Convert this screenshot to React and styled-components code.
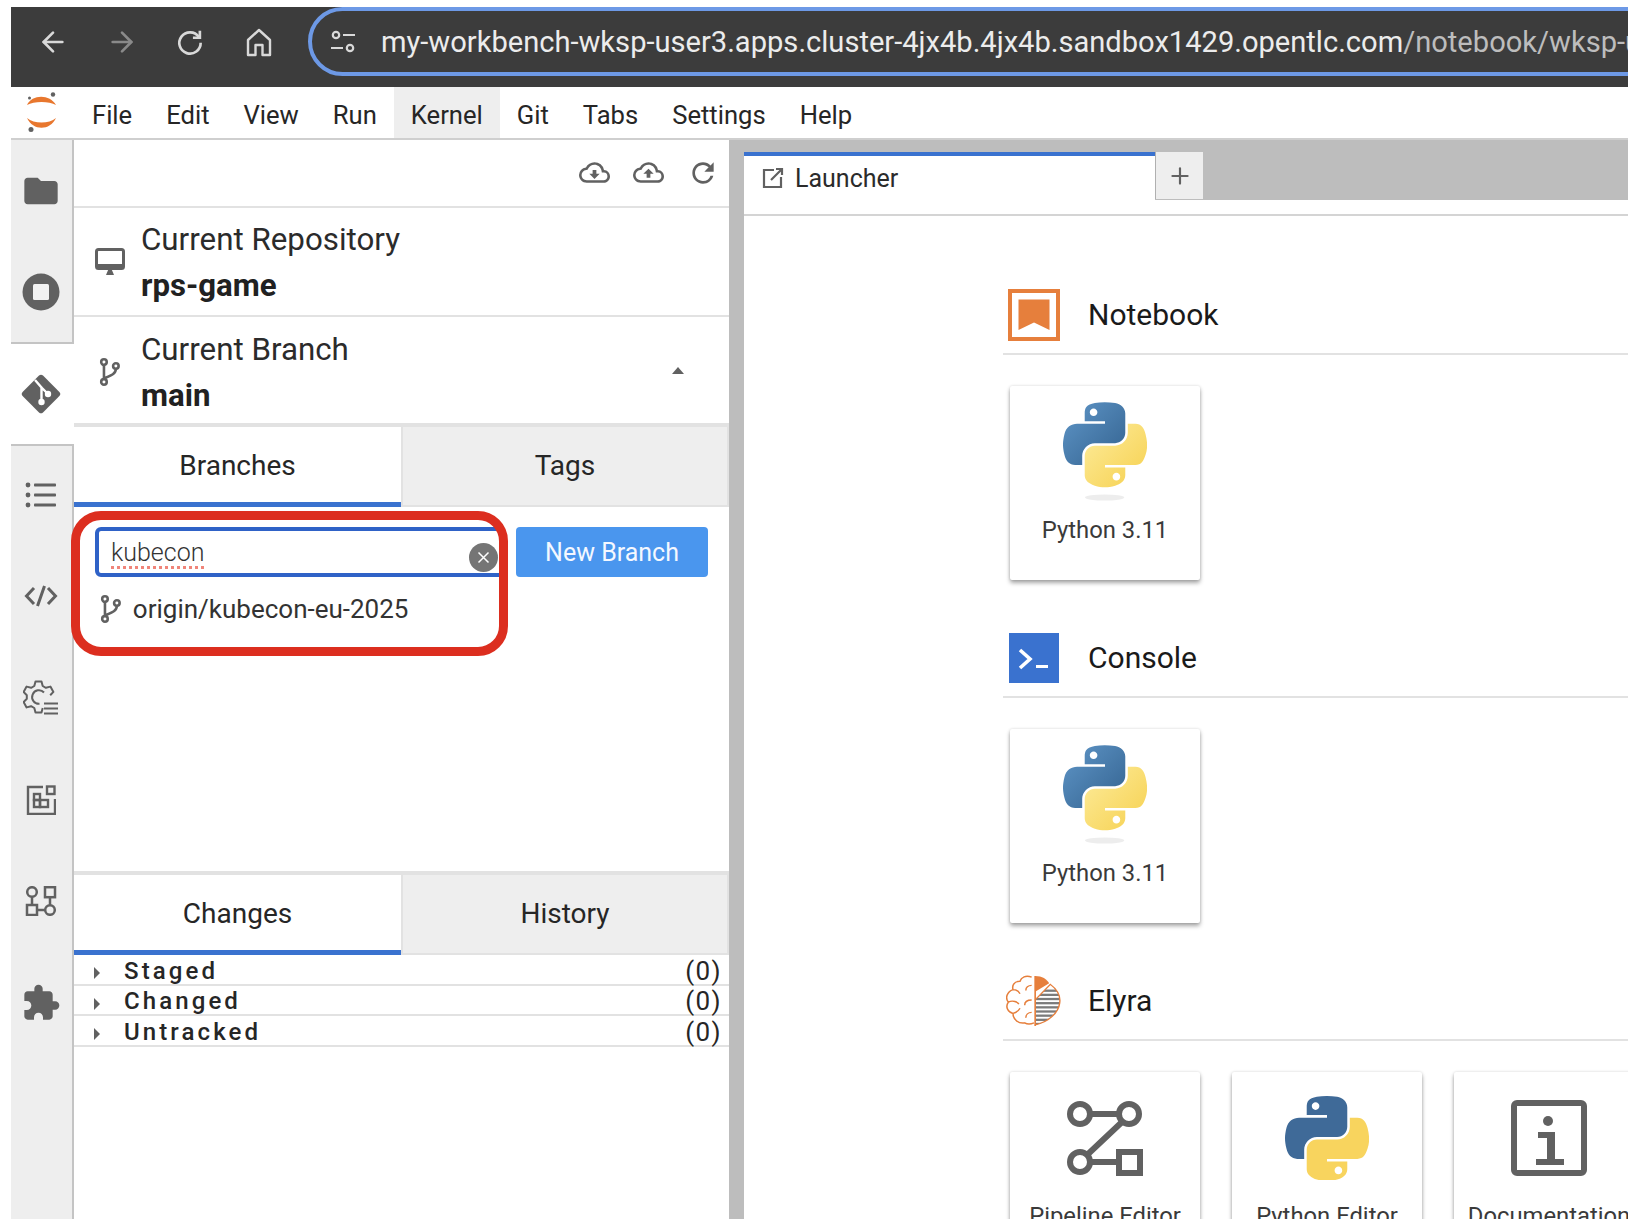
import React from 'react';
import styled, { createGlobalStyle } from 'styled-components';
import { ArrowLeft, ArrowRight, Plus } from 'lucide-react';
import { MdFolder, MdExtension, MdRefresh, MdOutlineCloudDownload, MdOutlineCloudUpload } from 'react-icons/md';

const GlobalStyle = createGlobalStyle`
  html, body { margin: 0; padding: 0; background: #fff; }
  body { font-family: Roboto, "Liberation Sans", sans-serif; color: #212121; }
  * { box-sizing: border-box; }
`;

const Screen = styled.div`
  width: 1638px;
  height: 1232px;
  padding: 7px 10px 13px 11px;
  display: flex;
  flex-direction: column;
  overflow: hidden;
  background: #fff;
`;

const BrowserBar = styled.div`
  height: 80px;
  flex: none;
  background: #3c3c3c;
  display: flex;
  overflow: hidden;
`;

const NavGroup = styled.div`
  display: flex;
  padding-left: 8px;
  height: 69px;
  flex: none;
`;

const NavButton = styled.div`
  width: 68.5px;
  display: flex;
  align-items: center;
  justify-content: center;
  color: ${p => (p.$muted ? '#8a8a8a' : '#d9d9d9')};
`;

const UrlPill = styled.div`
  margin-left: 15px;
  height: 69px;
  flex: 1;
  margin-right: -80px;
  min-width: 0;
  border: 4px solid #6d99e6;
  border-radius: 36px 0 0 36px;
  display: flex;
  align-items: center;
  padding-left: 18px;
  overflow: hidden;
  svg { flex: none; }
`;

const UrlText = styled.div`
  margin-left: 25px;
  font-size: 29.1px;
  white-space: nowrap;
  color: #ececec;
  span { color: #bdbdbd; }
`;

const MenuBar = styled.div`
  height: 53px;
  flex: none;
  display: flex;
  align-items: stretch;
  border-bottom: 2px solid #cfcfcf;
`;

const LogoSlot = styled.div`
  width: 64px;
  flex: none;
  display: flex;
  justify-content: flex-start;
  padding: 5px 0 0 15px;
`;

const MenuItem = styled.div`
  padding: 4px 17px 0;
  display: flex;
  align-items: center;
  font-size: 25.6px;
  color: #262626;
  background: ${p => (p.$open ? '#eeeeee' : 'transparent')};
`;

const Workspace = styled.div`
  flex: 1;
  min-height: 0;
  display: flex;
`;

const Rail = styled.div`
  width: 63px;
  flex: none;
  display: flex;
  flex-direction: column;
`;

const RailGroup = styled.div`
  background: #eeeeee;
  border-right: 2px solid #c4c4c4;
  ${p => p.$top && 'height: 204px; border-bottom: 2px solid #c4c4c4;'}
  ${p => p.$rest && 'border-top: 2px solid #c4c4c4; flex: 1;'}
`;

const ActiveRail = styled.div`
  height: 100px;
  background: #fff;
  display: flex;
  align-items: center;
  justify-content: center;
  padding-right: 3px;
  color: #616161;
`;

const RailItem = styled.div`
  height: 101.6px;
  display: flex;
  align-items: center;
  justify-content: center;
  padding-right: 1px;
  color: #616161;
  ${p => p.$first && 'margin-top: -2px;'}
`;

const GitPanel = styled.div`
  width: 655px;
  flex: none;
  display: flex;
  flex-direction: column;
`;

const PanelToolbar = styled.div`
  height: 68px;
  flex: none;
  border-bottom: 2px solid #e2e2e2;
  display: flex;
  justify-content: flex-end;
  align-items: flex-start;
  padding: 17px 10px 0 0;
  gap: 23px;
  color: #616161;
`;

const HeadRow = styled.div`
  height: 108.5px;
  flex: none;
  border-bottom: 2px solid #e2e2e2;
  display: flex;
  align-items: center;
  padding-top: ${p => p.$top}px;
  position: relative;
`;

const HeadIcon = styled.div`
  width: 67px;
  flex: none;
  display: flex;
  justify-content: center;
  padding-left: 4px;
  margin-top: -2px;
  color: #616161;
`;

const HeadText = styled.div`
  display: flex;
  flex-direction: column;
  gap: 6px;
`;

const HeadLabel = styled.div`
  font-size: 31.3px;
  line-height: 40px;
  color: #2b2b2b;
`;

const HeadValue = styled.div`
  font-size: 31.2px;
  line-height: 40px;
  font-weight: 700;
  color: #212121;
`;

const Caret = styled.div`
  position: absolute;
  right: 45px;
  top: 50px;
  width: 0;
  height: 0;
  border-left: 6px solid transparent;
  border-right: 6px solid transparent;
  border-bottom: 7px solid #616161;
`;

const TabRow = styled.div`
  height: 82px;
  flex: none;
  display: flex;
`;

const PanelTab = styled.div`
  flex: ${p => (p.$active ? '0 0 327px' : '1')};
  display: flex;
  align-items: center;
  justify-content: center;
  font-size: 28px;
  color: #262626;
  background: ${p => (p.$active ? '#fff' : '#eeeeee')};
  border-bottom: ${p => (p.$active ? '5px solid #3a72cf' : '2px solid #e2e2e2')};
  ${p => !p.$active && 'border-left: 2px solid #e2e2e2; border-right: 2px solid #e2e2e2;'}
  border-top: 2px solid #e2e2e2;
  padding: ${p => (p.$active ? '1px 0 0' : '0 0 2px')};
`;

const BranchPane = styled.div`
  height: 366px;
  flex: none;
  position: relative;
  border-bottom: 2px solid #e2e2e2;
  padding: 20px 21px 0 21px;
`;

const SearchRow = styled.div`
  display: flex;
  gap: 11px;
`;

const SearchField = styled.div`
  position: relative;
  width: 410px;
  height: 50px;
  flex: none;
  border: 4px solid #2f62c7;
  border-radius: 6px;
  padding-left: 12px;
  display: flex;
  align-items: center;
  font-size: 25px;
  font-weight: 300;
  color: #333;
`;

const Misspelled = styled.span`
  text-decoration: underline dotted #f0857a 2.5px;
  text-underline-offset: 5px;
`;

const ClearButton = styled.div`
  position: absolute;
  right: 3px;
  top: 12px;
  width: 29px;
  height: 29px;
  border-radius: 50%;
  background: #757575;
  color: #fff;
  display: flex;
  align-items: center;
  justify-content: center;
`;

const NewBranchButton = styled.div`
  width: 192px;
  height: 50px;
  flex: none;
  background: #4a96ee;
  color: #f4f8ff;
  border-radius: 4px;
  display: flex;
  align-items: center;
  justify-content: center;
  font-size: 25px;
`;

const BranchResult = styled.div`
  display: flex;
  align-items: center;
  height: 30px;
  margin-top: 17px;
  gap: 11px;
  padding-left: 5px;
  font-size: 26px;
  color: #333;
  svg { color: #616161; flex: none; }
`;

const Highlight = styled.div`
  position: absolute;
  left: -3px;
  top: 4px;
  width: 437px;
  height: 145px;
  border: 9.5px solid #dc2e1f;
  border-radius: 30px;
  pointer-events: none;
`;

const ChangeRow = styled.div`
  height: 30.5px;
  flex: none;
  border-bottom: 2px solid #e2e2e2;
  display: flex;
  align-items: center;
  padding: 3px 7px 0 20px;
  font-size: 24px;
  font-weight: 500;
  color: #262626;
  letter-spacing: 3.1px;
`;

const RowCaret = styled.div`
  width: 0;
  height: 0;
  margin-top: 5px;
  border-top: 6px solid transparent;
  border-bottom: 6px solid transparent;
  border-left: 6px solid #616161;
`;

const RowName = styled.div`
  margin-left: 24px;
  flex: 1;
`;

const RowCount = styled.div`
  font-size: 26px;
  letter-spacing: 1.4px;
  font-weight: 400;
`;

const Splitter = styled.div`
  width: 15px;
  flex: none;
  background: #bdbdbd;
`;

const MainArea = styled.div`
  flex: 1;
  min-width: 0;
  display: flex;
  flex-direction: column;
`;

const TabStrip = styled.div`
  height: 60px;
  flex: none;
  background: #bdbdbd;
  padding-top: 12px;
  display: flex;
`;

const DocTab = styled.div`
  width: 411px;
  flex: none;
  background: #fff;
  border-top: 4px solid #3a72cf;
  display: flex;
  align-items: center;
  padding-left: 17px;
  gap: 10px;
  font-size: 25px;
  color: #2b2b2b;
  svg { color: #616161; }
`;

const AddTab = styled.div`
  width: 48px;
  height: 47px;
  flex: none;
  background: #eeeeee;
  border-left: 1px solid #b0b0b0;
  display: flex;
  align-items: center;
  justify-content: center;
  color: #616161;
`;

const StripFoot = styled.div`
  height: 16px;
  flex: none;
  border-bottom: 2px solid #d4d4d4;
`;

const Launcher = styled.div`
  flex: 1;
  min-height: 0;
  overflow: hidden;
  padding: 73px 0 0 259px;
`;

const Section = styled.section`
  margin-bottom: 52px;
`;

const SectionHead = styled.div`
  height: 66px;
  display: flex;
  align-items: flex-start;
  border-bottom: 2px solid #e2e2e2;
`;

const SectionIcon = styled.div`
  width: 85px;
  height: 52px;
  flex: none;
  display: flex;
  align-items: center;
  padding-left: ${p => p.$inset}px;
`;

const SectionTitle = styled.div`
  font-size: 30px;
  line-height: 52px;
  color: #1a1a1a;
`;

const CardGrid = styled.div`
  display: flex;
  gap: 32px;
  padding: 31px 0 0 7px;
`;

const Card = styled.div`
  width: 190px;
  height: 194px;
  flex: none;
  background: #fff;
  border-radius: 2px;
  box-shadow: 0 3px 4px rgba(0, 0, 0, 0.34), 0 0 3px rgba(0, 0, 0, 0.14);
  display: flex;
  flex-direction: column;
  align-items: center;
`;

const CardIcon = styled.div`
  height: 128px;
  flex: none;
  padding-top: ${p => p.$top}px;
  display: flex;
  justify-content: center;
  color: #616161;
`;

const CardLabel = styled.div`
  height: 32px;
  line-height: 32px;
  font-size: 23.8px;
  color: #3a3a3a;
  white-space: nowrap;
`;

const BranchIcon = ({ size = 28 }) => (
  <svg width={size * 0.78} height={size} viewBox="0 0 22 28" fill="none" stroke="currentColor" strokeWidth="2.6">
    <circle cx="5" cy="4" r="2.8" />
    <circle cx="5" cy="24" r="2.8" />
    <circle cx="17" cy="8" r="2.8" />
    <path d="M5 6.800V21.200M17 10.800c0 5-4.500 6.500-12 9.700" />
  </svg>
);

const JupyterLogo = () => (
  <svg width="32" height="42" viewBox="0 0 32 42">
    <path d="M1 13C6 2 24 2 30 13 23 9 8 9 1 13z" fill="#e8772e" />
    <path d="M1 26C8 32 23 32 30 26 24 39 7 39 1 26z" fill="#e8772e" />
    <circle cx="27" cy="2.500" r="2.200" fill="#616161" />
    <circle cx="3.500" cy="6" r="1.500" fill="#616161" />
    <circle cx="5" cy="37.500" r="2.500" fill="#616161" />
  </svg>
);

const ReloadIcon = ({ size, color }) => (
  <svg width={size} height={size} viewBox="0 0 24 24" fill="none" stroke={color} strokeWidth="2">
    <path d="M18.600 8.200A8 8 0 1 0 20 12.600" />
    <path d="M19.400 3.600v5.200h-5.200" />
  </svg>
);

const HomeIcon = () => (
  <svg width="30" height="32" viewBox="0 0 30 32" fill="none" stroke="#d9d9d9" strokeWidth="2.400" strokeLinejoin="round">
    <path d="M4 14L15 4l11 10v15h-7.500V19h-7v10H4z" />
  </svg>
);

const TuneIcon = () => (
  <svg width="26" height="24" viewBox="0 0 26 24" fill="none" stroke="#d9d9d9" strokeWidth="2.200">
    <circle cx="6" cy="5" r="3.200" />
    <path d="M13 5h12M1 18h12" />
    <circle cx="20" cy="18" r="3.200" />
  </svg>
);

const StopIcon = () => (
  <svg width="38" height="38" viewBox="0 0 38 38">
    <circle cx="19" cy="19" r="18.500" fill="#616161" />
    <rect x="11" y="11" width="16" height="16" rx="1.500" fill="#f2f2f2" />
  </svg>
);

const GitIcon = () => (
  <svg width="40" height="40" viewBox="0 0 40 40">
    <path d="M18 1.600a3 3 0 0 1 4 0l16.400 16.400a3 3 0 0 1 0 4L22 38.400a3 3 0 0 1-4 0L1.600 22a3 3 0 0 1 0-4z" fill="#616161" />
    <path d="M14 6l6.500 7.500v14M20.500 13.500l6 6" stroke="#fff" strokeWidth="2.400" fill="none" />
    <circle cx="20.500" cy="28" r="3.200" fill="#fff" />
    <circle cx="27" cy="20" r="3.200" fill="#fff" />
  </svg>
);

const ListIcon = () => (
  <svg width="32" height="26" viewBox="0 0 32 26" fill="#616161">
    <circle cx="3" cy="3" r="2.400" />
    <circle cx="3" cy="13" r="2.400" />
    <circle cx="3" cy="23" r="2.400" />
    <rect x="9" y="1.400" width="22" height="3.200" rx="0.800" />
    <rect x="9" y="11.400" width="22" height="3.200" rx="0.800" />
    <rect x="9" y="21.400" width="22" height="3.200" rx="0.800" />
  </svg>
);

const CodeIcon = () => (
  <svg width="34" height="22" viewBox="0 0 34 22" fill="none" stroke="#616161" strokeWidth="3">
    <path d="M10 3L2.500 11 10 19M24 3l7.500 8L24 19M20.500 1l-7 20" />
  </svg>
);

// outline of a six-tooth cog, left open at the lower right where the list lines sit
const cogPath = () => {
  const cx = 15.5;
  const cy = 17;
  const pts = [];
  for (let deg = 90; deg <= 330; deg += 60) {
    [[-21, 11.8], [-11, 15.8], [11, 15.8], [21, 11.8]].forEach(([off, r]) => {
      const a = ((deg + off) * Math.PI) / 180;
      pts.push(`${(cx + r * Math.cos(a)).toFixed(1)} ${(cy + r * Math.sin(a)).toFixed(1)}`);
    });
  }
  return `M${pts.join('L')}`;
};

const GearListIcon = () => (
  <svg width="36" height="36" viewBox="0 0 36 36" fill="none" stroke="#616161" strokeWidth="2" strokeLinejoin="round">
    <path d={cogPath()} />
    <path d="M21 12.500a6.800 6.800 0 1 0-4.500 11.300" />
    <path d="M21 23.500h14M21 28.500h14M21 33.500h14" />
  </svg>
);

const BoardIcon = () => (
  <svg width="30" height="30" viewBox="0 0 30 30" fill="none" stroke="#616161" strokeWidth="2.400">
    <path d="M17 2H2v27h27V14" />
    <rect x="21" y="1.500" width="7.500" height="7.500" />
    <rect x="8" y="9" width="6" height="6" />
    <rect x="8" y="15" width="6" height="7" />
    <rect x="14" y="15" width="8" height="7" />
  </svg>
);

const TreeIcon = () => (
  <svg width="32" height="30" viewBox="0 0 32 30" fill="none" stroke="#616161" strokeWidth="2.500">
    <circle cx="7" cy="6" r="4.800" />
    <rect x="20" y="1.200" width="10" height="10" />
    <rect x="2" y="19" width="10" height="10" />
    <circle cx="25" cy="24" r="4.800" />
    <path d="M7 11v8M25 11v8M12 24h8" />
  </svg>
);

const MonitorIcon = () => (
  <svg width="30" height="28" viewBox="0 0 30 28">
    <rect x="1.500" y="1.500" width="27" height="19" rx="2" fill="#fff" stroke="#616161" strokeWidth="3" />
    <rect x="1" y="16" width="28" height="5" fill="#616161" />
    <path d="M11 27l2.500-6h3l2.500 6z" fill="#616161" />
  </svg>
);

const PythonDefs = () => (
  <svg width="0" height="0" style={{ position: 'absolute' }}>
    <defs>
      <linearGradient id="pyBlue" x1="0" y1="0" x2="1" y2="1">
        <stop offset="0" stopColor="#5f96c8" />
        <stop offset="1" stopColor="#33628f" />
      </linearGradient>
      <linearGradient id="pyYellow" x1="0" y1="0" x2="1" y2="1">
        <stop offset="0" stopColor="#fdec9c" />
        <stop offset="1" stopColor="#f6d04e" />
      </linearGradient>
    </defs>
  </svg>
);

const bluePath = 'M54.919 0c-4.584.022-8.961.413-12.813 1.095C30.76 3.099 28.7 7.295 28.7 15.032v10.219h26.813v3.406H18.638c-7.793 0-14.616 4.684-16.75 13.594-2.462 10.213-2.571 16.586 0 27.25 1.905 7.938 6.457 13.594 14.25 13.594h9.219v-12.25c0-8.85 7.657-16.656 16.75-16.656h26.781c7.454 0 13.406-6.138 13.406-13.625V15.032c0-7.266-6.13-12.725-13.406-13.937C64.282.328 59.502-.02 54.918 0zm-14.5 8.22c2.77 0 5.031 2.299 5.031 5.125 0 2.816-2.262 5.093-5.031 5.093-2.78 0-5.031-2.277-5.031-5.093 0-2.826 2.252-5.125 5.03-5.125z';
const yellowPath = 'M85.638 28.657v11.906c0 9.231-7.826 17-16.75 17H42.106c-7.336 0-13.406 6.278-13.406 13.625v25.531c0 7.266 6.319 11.54 13.406 13.625 8.488 2.496 16.627 2.947 26.781 0 6.75-1.954 13.406-5.888 13.406-13.625V86.501H55.513v-3.406H95.7c7.793 0 10.696-5.436 13.406-13.594 2.8-8.399 2.68-16.476 0-27.25-1.926-7.757-5.604-13.594-13.406-13.594zm-15.063 64.656c2.78 0 5.031 2.277 5.031 5.093 0 2.826-2.252 5.125-5.031 5.125-2.77 0-5.031-2.299-5.031-5.125 0-2.816 2.262-5.093 5.031-5.093z';

const PythonLogo = ({ flat }) => (
  <svg width="84" height={flat ? 84 : 104} viewBox={flat ? '0 0 111 111' : '0 0 111 137'}>
    <path d={bluePath} fill={flat ? '#3f6a98' : 'url(#pyBlue)'} />
    <path d={yellowPath} fill={flat ? '#f8d45e' : 'url(#pyYellow)'} />
    {!flat && <ellipse cx="55" cy="126" rx="26" ry="4" fill="#000" opacity="0.07" />}
  </svg>
);

const NotebookIcon = () => (
  <svg width="52" height="52" viewBox="0 0 52 52">
    <rect x="2" y="2" width="48" height="48" fill="none" stroke="#e67f3c" strokeWidth="4" />
    <path d="M10.500 10.500h31v30.500L26 33.500 10.500 41z" fill="#e67f3c" />
  </svg>
);

const ConsoleIcon = () => (
  <svg width="50" height="50" viewBox="0 0 50 50">
    <rect width="50" height="50" fill="#3a72cf" />
    <path d="M11 17l10 9-10 9" fill="none" stroke="#fff" strokeWidth="3.600" />
    <rect x="27" y="32" width="12" height="3" fill="#fff" />
  </svg>
);

const ElyraIcon = () => (
  <svg width="56" height="52" viewBox="2 0 48 50" preserveAspectRatio="none" fill="none">
    <clipPath id="elyraHalf"><path d="M27 24L40 9c6 5 9 11 8 18-1 9-9 18-21 21z" /></clipPath>
    <g clipPath="url(#elyraHalf)">
      {[14, 18, 22, 26, 30, 34, 38, 42, 46, 50].map(y => (
        <rect key={y} x="27" y={y} width="28" height="2.200" fill="#7b7b7b" />
      ))}
    </g>
    <path d="M27 1c6 0 10 3 12 7l-12 8z" fill="#e67f3c" />
    <path d="M27 1v48" stroke="#e67f3c" strokeWidth="1.400" />
    <path d="M27 24L40 9c6 5 9 11 8 18-1 9-9 18-21 21" stroke="#e67f3c" strokeWidth="1.200" />
    <path d="M24 2c-5-2-9 0-10 4-5 0-7 4-6 8-5 2-7 8-4 12-3 5 0 10 4 11 0 6 5 10 10 9 3 2 6 1 8 0M24 10c-3 0-5 2-5 5M8 14c3 0 5 2 6 4M4 26c4-2 8 0 9 2M24 24c-4 0-6 2-6 5M8 37c3-1 5-3 6-5M24 36c-3 0-5 2-5 5" stroke="#e67f3c" strokeWidth="1.300" />
  </svg>
);

const PipelineIcon = () => (
  <svg width="76" height="76" viewBox="0 0 76 76" fill="none" stroke="#616161" strokeWidth="6">
    <circle cx="13" cy="14" r="10" />
    <circle cx="62" cy="14" r="10" />
    <circle cx="13" cy="62" r="10" />
    <rect x="52" y="52" width="21" height="21" />
    <path d="M23 14h29M55 22L20 55M23 62h29" />
  </svg>
);

const InfoIcon = () => (
  <svg width="76" height="76" viewBox="0 0 76 76">
    <rect x="3" y="3" width="70" height="70" rx="3" fill="none" stroke="#616161" strokeWidth="6" />
    <circle cx="37" cy="21" r="5" fill="#616161" />
    <path d="M27 32h17v27h9v6H25v-6h11V38h-9z" fill="#616161" />
  </svg>
);

const menuItems = ['File', 'Edit', 'View', 'Run', 'Kernel', 'Git', 'Tabs', 'Settings', 'Help'];
const changeRows = ['Staged', 'Changed', 'Untracked'];

const App = () => {
  return (
    <Screen>
      <GlobalStyle />
      <PythonDefs />
      <BrowserBar>
        <NavGroup>
          <NavButton><ArrowLeft size={32} strokeWidth={2} /></NavButton>
          <NavButton $muted><ArrowRight size={32} strokeWidth={2} /></NavButton>
          <NavButton><ReloadIcon size={32} color="#d9d9d9" /></NavButton>
          <NavButton><HomeIcon /></NavButton>
        </NavGroup>
        <UrlPill>
          <TuneIcon />
          <UrlText>
            my-workbench-wksp-user3.apps.cluster-4jx4b.4jx4b.sandbox1429.opentlc.com<span>/notebook/wksp-user3/my-workbench/lab</span>
          </UrlText>
        </UrlPill>
      </BrowserBar>

      <MenuBar>
        <LogoSlot><JupyterLogo /></LogoSlot>
        {menuItems.map(item => (
          <MenuItem key={item} $open={item === 'Kernel'}>{item}</MenuItem>
        ))}
      </MenuBar>

      <Workspace>
        <Rail>
          <RailGroup $top>
            <RailItem><MdFolder size={40} /></RailItem>
            <RailItem><StopIcon /></RailItem>
          </RailGroup>
          <ActiveRail><GitIcon /></ActiveRail>
          <RailGroup $rest>
            <RailItem $first><ListIcon /></RailItem>
            <RailItem><CodeIcon /></RailItem>
            <RailItem><GearListIcon /></RailItem>
            <RailItem><BoardIcon /></RailItem>
            <RailItem><TreeIcon /></RailItem>
            <RailItem><MdExtension size={40} /></RailItem>
          </RailGroup>
        </Rail>

        <GitPanel>
          <PanelToolbar>
            <MdOutlineCloudDownload size={31} />
            <MdOutlineCloudUpload size={31} />
            <MdRefresh size={32} />
          </PanelToolbar>
          <HeadRow $top={3}>
            <HeadIcon><MonitorIcon /></HeadIcon>
            <HeadText>
              <HeadLabel>Current Repository</HeadLabel>
              <HeadValue>rps-game</HeadValue>
            </HeadText>
          </HeadRow>
          <HeadRow $top={7}>
            <HeadIcon><BranchIcon /></HeadIcon>
            <HeadText>
              <HeadLabel>Current Branch</HeadLabel>
              <HeadValue>main</HeadValue>
            </HeadText>
            <Caret />
          </HeadRow>
          <TabRow>
            <PanelTab $active>Branches</PanelTab>
            <PanelTab>Tags</PanelTab>
          </TabRow>
          <BranchPane>
            <SearchRow>
              <SearchField>
                <Misspelled>kubecon</Misspelled>
                <ClearButton>
                  <svg width="13" height="13" viewBox="0 0 13 13" stroke="#fff" strokeWidth="1.500">
                    <path d="M1.500 1.500l10 10M11.500 1.500l-10 10" />
                  </svg>
                </ClearButton>
              </SearchField>
              <NewBranchButton>New Branch</NewBranchButton>
            </SearchRow>
            <BranchResult>
              <BranchIcon />
              origin/kubecon-eu-2025
            </BranchResult>
            <Highlight />
          </BranchPane>
          <TabRow>
            <PanelTab $active>Changes</PanelTab>
            <PanelTab>History</PanelTab>
          </TabRow>
          {changeRows.map(name => (
            <ChangeRow key={name}>
              <RowCaret />
              <RowName>{name}</RowName>
              <RowCount>(0)</RowCount>
            </ChangeRow>
          ))}
        </GitPanel>

        <Splitter />

        <MainArea>
          <TabStrip>
            <DocTab>
              <svg width="24" height="24" viewBox="0 0 24 24" fill="none" stroke="currentColor" strokeWidth="2.200">
                <path d="M13 4H3v17h17V11M10 14L21 3M15 3h6v6" />
              </svg>
              Launcher
            </DocTab>
            <AddTab><Plus size={26} strokeWidth={2} /></AddTab>
          </TabStrip>
          <StripFoot />
          <Launcher>
            <Section>
              <SectionHead>
                <SectionIcon $inset={5}><NotebookIcon /></SectionIcon>
                <SectionTitle>Notebook</SectionTitle>
              </SectionHead>
              <CardGrid>
                <Card>
                  <CardIcon $top={16}><PythonLogo /></CardIcon>
                  <CardLabel>Python 3.11</CardLabel>
                </Card>
              </CardGrid>
            </Section>
            <Section>
              <SectionHead>
                <SectionIcon $inset={6}><ConsoleIcon /></SectionIcon>
                <SectionTitle>Console</SectionTitle>
              </SectionHead>
              <CardGrid>
                <Card>
                  <CardIcon $top={16}><PythonLogo /></CardIcon>
                  <CardLabel>Python 3.11</CardLabel>
                </Card>
              </CardGrid>
            </Section>
            <Section>
              <SectionHead>
                <SectionIcon $inset={3}><ElyraIcon /></SectionIcon>
                <SectionTitle>Elyra</SectionTitle>
              </SectionHead>
              <CardGrid>
                <Card>
                  <CardIcon $top={28}><PipelineIcon /></CardIcon>
                  <CardLabel>Pipeline Editor</CardLabel>
                </Card>
                <Card>
                  <CardIcon $top={24}><PythonLogo flat /></CardIcon>
                  <CardLabel>Python Editor</CardLabel>
                </Card>
                <Card>
                  <CardIcon $top={28}><InfoIcon /></CardIcon>
                  <CardLabel>Documentation</CardLabel>
                </Card>
              </CardGrid>
            </Section>
          </Launcher>
        </MainArea>
      </Workspace>
    </Screen>
  );
};

export default App;
